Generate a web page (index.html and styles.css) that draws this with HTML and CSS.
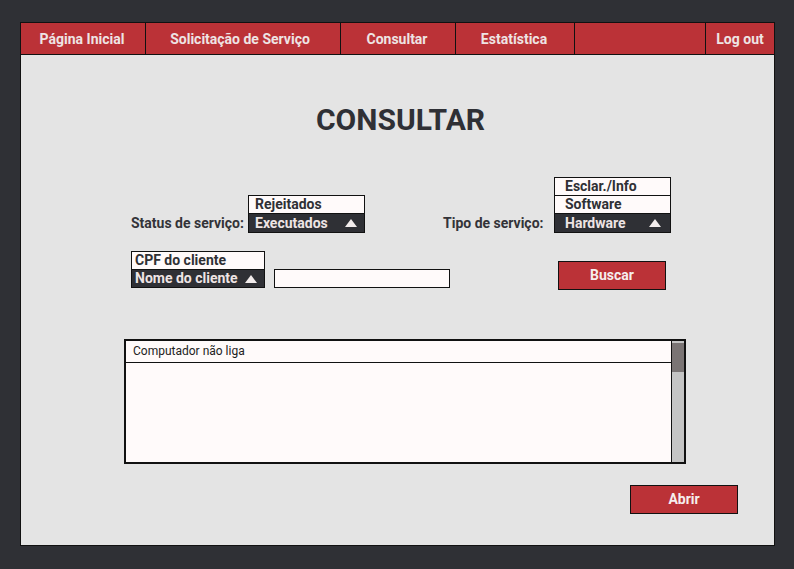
FILE: index.html
```html
<!DOCTYPE html>
<html lang="pt-BR">
<head>
<meta charset="utf-8">
<title>Consultar</title>
<link rel="stylesheet" href="styles.css">
</head>
<body>
<div class="frame">
  <nav class="nav">
    <div class="nav-item w1">Página Inicial</div>
    <div class="nav-item w2">Solicitação de Serviço</div>
    <div class="nav-item w3">Consultar</div>
    <div class="nav-item w4">Estatística</div>
    <div class="nav-item w5"></div>
    <div class="nav-item w6">Log out</div>
  </nav>
  <main class="content">
    <h1 class="title">CONSULTAR</h1>
    <div class="row row-filters">
      <div class="label label-status">Status de serviço:</div>
      <div class="dropdown dd-status">
        <div class="opt">Rejeitados</div>
        <div class="sel"><span>Executados</span><svg class="tri" width="12" height="8" viewBox="0 0 12 8"><path d="M6 0 L12 8 L0 8 Z" fill="#f2ecec"/></svg></div>
      </div>
      <div class="label label-tipo">Tipo de serviço:</div>
      <div class="dropdown dd-tipo">
        <div class="opt">Esclar./Info</div>
        <div class="opt">Software</div>
        <div class="sel"><span>Hardware</span><svg class="tri" width="12" height="8" viewBox="0 0 12 8"><path d="M6 0 L12 8 L0 8 Z" fill="#f2ecec"/></svg></div>
      </div>
    </div>
    <div class="row row-search">
      <div class="dropdown dd-cpf">
        <div class="opt">CPF do cliente</div>
        <div class="sel sel-short"><span>Nome do cliente</span><svg class="tri" width="12" height="8" viewBox="0 0 12 8"><path d="M6 0 L12 8 L0 8 Z" fill="#f2ecec"/></svg></div>
      </div>
      <div class="text-input"></div>
      <button class="btn btn-buscar">Buscar</button>
    </div>
    <div class="list">
      <div class="list-body">
        <div class="list-row">Computador não liga</div>
      </div>
      <div class="scrollbar"><div class="thumb"></div></div>
    </div>
    <div class="row row-actions">
      <button class="btn btn-abrir">Abrir</button>
    </div>
  </main>
</div>
</body>
</html>
```

FILE: styles.css
```css
* { box-sizing: border-box; }
html, body { margin: 0; padding: 0; }
body {
  background: #2f3035;
  font-family: Roboto, "Liberation Sans", Arial, sans-serif;
  padding: 22px 0 0 20px;
  width: 794px;
  height: 569px;
  overflow: hidden;
}
.frame {
  width: 755px;
  height: 524px;
  border: 1px solid #111;
  background: #e4e4e4;
}
.nav {
  display: flex;
  height: 32px;
  background: #bb3237;
  border-bottom: 1px solid #111;
}
.nav-item {
  display: flex;
  align-items: center;
  justify-content: center;
  color: #eee4e4;
  font-weight: 700;
  font-size: 14px;
  border-right: 1px solid #111;
  height: 31px;
  padding: 0 2px 0 0;
}
.w1 { width: 125px; }
.w2 { width: 195px; padding-right: 6px; }
.w3 { width: 115px; }
.w4 { width: 119px; }
.w5 { width: 131px; }
.w6 { width: 68px; border-right: none; padding-right: 0; }
.content {
  padding-top: 48px;
}
.title {
  margin: 0;
  font-size: 30px;
  line-height: 34px;
  font-weight: 700;
  color: #2f3035;
  text-align: center;
  padding-left: 6px;
}
.row { display: flex; align-items: flex-end; }
.row-filters { margin-top: 40px; padding-left: 110px; }
.label {
  font-size: 14px;
  font-weight: 700;
  color: #333338;
  line-height: 18px;
  margin-bottom: 1px;
}
.label-status { width: 117px; }
.label-tipo { width: 111px; margin-left: 78px; }
.dropdown {
  border: 1px solid #111;
  background: #fffafa;
  font-size: 14px;
  font-weight: 700;
}
.dd-status, .dd-tipo { width: 117px; }
.dd-cpf { width: 134px; }
.opt {
  height: 18px;
  line-height: 17px;
  border-bottom: 1px solid #111;
  color: #2f3035;
  padding-left: 6px;
}
.sel {
  height: 18px;
  line-height: 18px;
  background: #2f3035;
  color: #eee4e4;
  display: flex;
  align-items: center;
  justify-content: space-between;
  padding: 0 7px 0 6px;
}
.sel-short { height: 17px; line-height: 17px; }
.dd-tipo .opt, .dd-tipo .sel { padding-left: 10px; }
.dd-tipo .sel { padding-right: 9px; }
.dd-cpf .opt, .dd-cpf .sel { padding-left: 3px; }
.tri { display: block; flex: none; }
.row-search { margin-top: 18px; padding-left: 110px; }
.text-input {
  width: 176px;
  height: 19px;
  margin-left: 9px;
  border: 1px solid #111;
  background: #fffafa;
}
.btn {
  width: 108px;
  height: 29px;
  background: #bb3237;
  border: 1px solid #111;
  color: #f6eeee;
  font-family: Roboto, "Liberation Sans", Arial, sans-serif;
  font-size: 14px;
  font-weight: 700;
  padding: 0 0 2px;
}
.btn-buscar { margin-left: 108px; margin-bottom: -2px; }
.list {
  margin: 51px 0 0 103px;
  width: 562px;
  height: 125px;
  border: 2px solid #111;
  display: flex;
  background: #fffafa;
}
.list-body { flex: 1; }
.list-row {
  height: 22px;
  line-height: 21px;
  border-bottom: 1px solid #111;
  font-size: 12px;
  color: #222;
  padding-left: 7px;
}
.scrollbar {
  width: 13px;
  border-left: 1px solid #111;
  background: #c4c4c4;
  padding-top: 2px;
}
.thumb { height: 29px; background: #7a7474; }
.row-actions { justify-content: flex-end; margin-top: 21px; padding-right: 36px; }
```
